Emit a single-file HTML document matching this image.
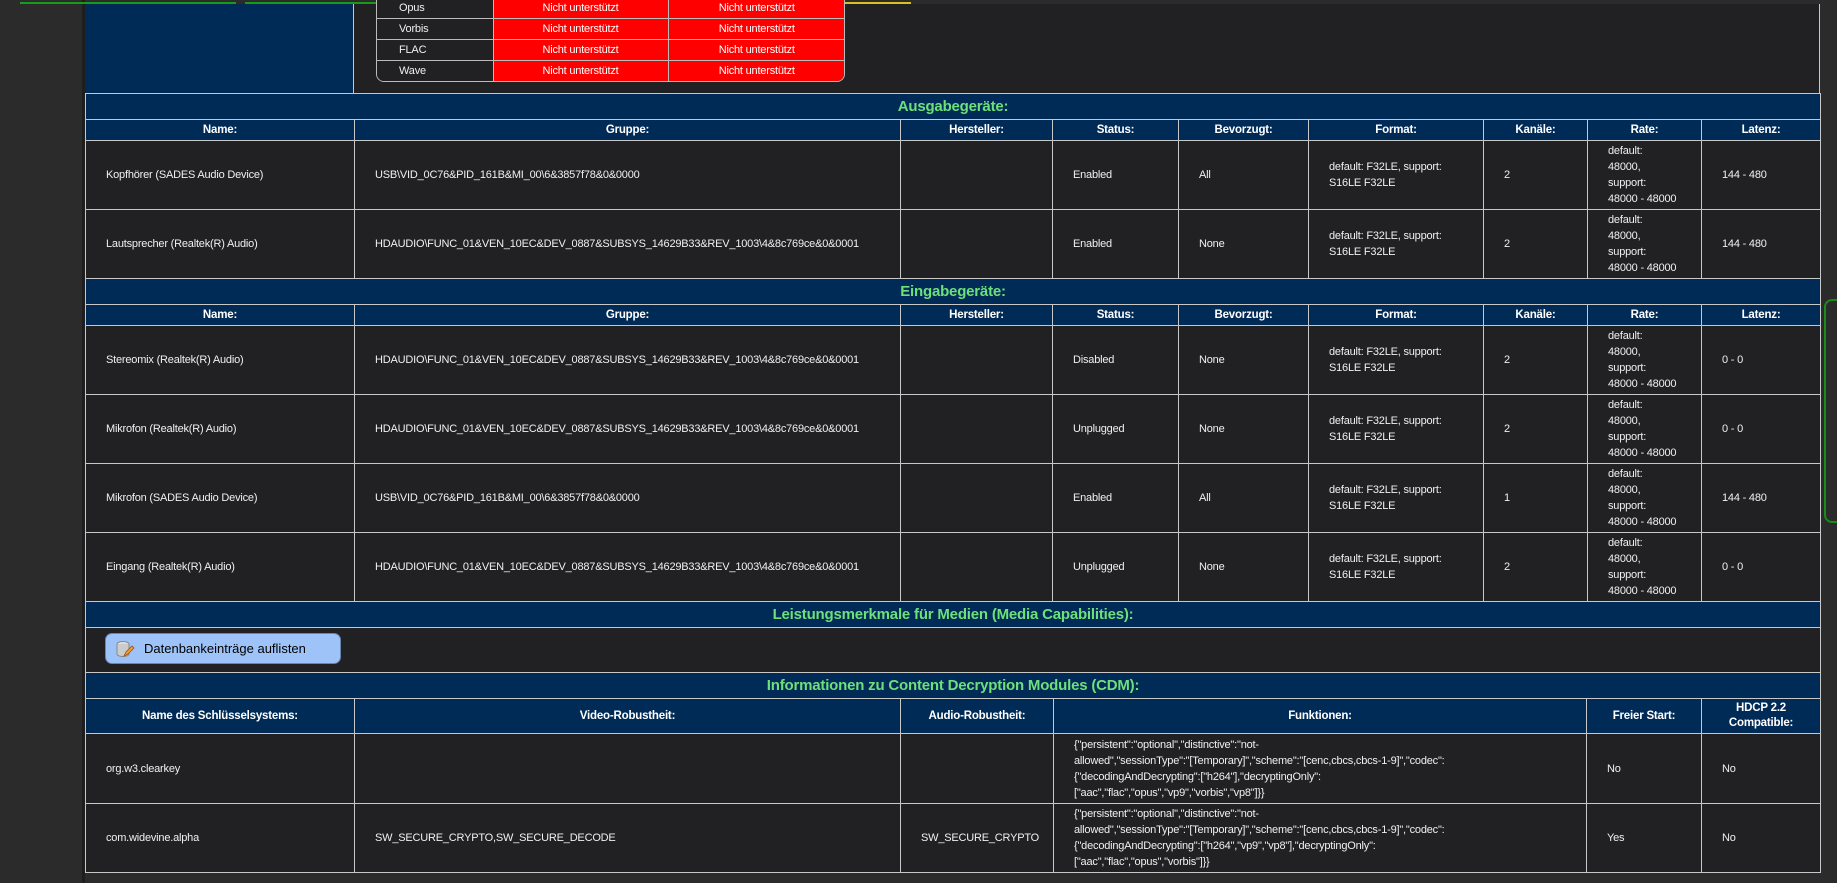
<!DOCTYPE html>
<html><head><meta charset="utf-8"><style>
*{box-sizing:border-box;margin:0;padding:0}
body{width:1837px;height:883px;background:#2b2b2b;position:relative;overflow:hidden;font-family:"Liberation Sans",sans-serif;color:#f0f0f0;font-size:12px}
.abs{position:absolute}
table{position:absolute;border-collapse:collapse;table-layout:fixed;left:85px;width:1735px}
td,th{border:1px solid #c8c8c8;overflow:hidden;white-space:nowrap}
td{background:#212124;padding:0 0 0 20px;line-height:16px;font-size:11px;letter-spacing:-0.2px}
th{background:#002b57;color:#fff;font-size:11.5px;font-weight:bold;text-align:center;letter-spacing:-0.2px}
th.sec{color:#6de07a;font-size:15px;height:26px}
td.w{white-space:normal}
.codec td{background:#212124;height:21px;padding:0;border-color:#bbb}
.codec td.r{background:#f00;color:#fff;text-align:center}
</style></head><body>
<div class="abs" style="left:82px;top:0;width:3px;height:883px;background:#1e1e1e"></div>
<div class="abs" style="left:85px;top:0;width:269px;height:93px;background:#002b57;border-right:1px solid #c8c8c8"></div>
<div class="abs" style="left:354px;top:0;width:1466px;height:93px;background:#212124;border-right:1px solid #c8c8c8"></div>
<div class="abs" style="left:85px;top:0;width:1735px;height:4px;background:#2b2b2b"></div>
<div class="abs" style="left:20px;top:2px;width:216px;height:2px;background:#1a9a1a"></div>
<div class="abs" style="left:245px;top:2px;width:216px;height:2px;background:#1a9a1a"></div>
<div class="abs" style="left:470px;top:2px;width:216px;height:2px;background:#1a9a1a"></div>
<div class="abs" style="left:695px;top:2px;width:216px;height:2px;background:#d8c020"></div>
<div class="abs" style="left:376px;top:-3px;width:469px;height:85px;border:1px solid #bbb;border-top:none;border-radius:0 0 8px 8px;overflow:hidden">
<table class="codec" style="left:0;top:0;width:468px">
<colgroup><col style="width:116px"><col style="width:175px"><col style="width:177px"></colgroup>
<tr><td style="padding-left:22px;border-left:none">Opus</td><td class="r">Nicht unterstützt</td><td class="r" style="border-right:none">Nicht unterstützt</td></tr>
<tr><td style="padding-left:22px;border-left:none">Vorbis</td><td class="r">Nicht unterstützt</td><td class="r" style="border-right:none">Nicht unterstützt</td></tr>
<tr><td style="padding-left:22px;border-left:none">FLAC</td><td class="r">Nicht unterstützt</td><td class="r" style="border-right:none">Nicht unterstützt</td></tr>
<tr><td style="padding-left:22px;border-left:none;border-bottom:none">Wave</td><td class="r" style="border-bottom:none">Nicht unterstützt</td><td class="r" style="border-right:none;border-bottom:none">Nicht unterstützt</td></tr>
</table></div>

<table style="top:93px">
<colgroup><col style="width:269px"><col style="width:546px"><col style="width:152px"><col style="width:126px"><col style="width:130px"><col style="width:175px"><col style="width:104px"><col style="width:114px"><col style="width:119px"></colgroup>
<tr><th class="sec" colspan="9">Ausgabegeräte:</th></tr>
<tr style="height:21px"><th>Name:</th><th>Gruppe:</th><th>Hersteller:</th><th>Status:</th><th>Bevorzugt:</th><th>Format:</th><th>Kanäle:</th><th>Rate:</th><th>Latenz:</th></tr>
<tr style="height:69px"><td>Kopfhörer (SADES Audio Device)</td><td>USB\VID_0C76&amp;PID_161B&amp;MI_00\6&amp;3857f78&amp;0&amp;0000</td><td></td><td>Enabled</td><td>All</td><td>default: F32LE, support:<br>S16LE F32LE</td><td>2</td><td>default:<br>48000,<br>support:<br>48000 - 48000</td><td>144 - 480</td></tr>
<tr style="height:69px"><td>Lautsprecher (Realtek(R) Audio)</td><td>HDAUDIO\FUNC_01&amp;VEN_10EC&amp;DEV_0887&amp;SUBSYS_14629B33&amp;REV_1003\4&amp;8c769ce&amp;0&amp;0001</td><td></td><td>Enabled</td><td>None</td><td>default: F32LE, support:<br>S16LE F32LE</td><td>2</td><td>default:<br>48000,<br>support:<br>48000 - 48000</td><td>144 - 480</td></tr>
<tr><th class="sec" colspan="9">Eingabegeräte:</th></tr>
<tr style="height:21px"><th>Name:</th><th>Gruppe:</th><th>Hersteller:</th><th>Status:</th><th>Bevorzugt:</th><th>Format:</th><th>Kanäle:</th><th>Rate:</th><th>Latenz:</th></tr>
<tr style="height:69px"><td>Stereomix (Realtek(R) Audio)</td><td>HDAUDIO\FUNC_01&amp;VEN_10EC&amp;DEV_0887&amp;SUBSYS_14629B33&amp;REV_1003\4&amp;8c769ce&amp;0&amp;0001</td><td></td><td>Disabled</td><td>None</td><td>default: F32LE, support:<br>S16LE F32LE</td><td>2</td><td>default:<br>48000,<br>support:<br>48000 - 48000</td><td>0 - 0</td></tr>
<tr style="height:69px"><td>Mikrofon (Realtek(R) Audio)</td><td>HDAUDIO\FUNC_01&amp;VEN_10EC&amp;DEV_0887&amp;SUBSYS_14629B33&amp;REV_1003\4&amp;8c769ce&amp;0&amp;0001</td><td></td><td>Unplugged</td><td>None</td><td>default: F32LE, support:<br>S16LE F32LE</td><td>2</td><td>default:<br>48000,<br>support:<br>48000 - 48000</td><td>0 - 0</td></tr>
<tr style="height:69px"><td>Mikrofon (SADES Audio Device)</td><td>USB\VID_0C76&amp;PID_161B&amp;MI_00\6&amp;3857f78&amp;0&amp;0000</td><td></td><td>Enabled</td><td>All</td><td>default: F32LE, support:<br>S16LE F32LE</td><td>1</td><td>default:<br>48000,<br>support:<br>48000 - 48000</td><td>144 - 480</td></tr>
<tr style="height:69px"><td>Eingang (Realtek(R) Audio)</td><td>HDAUDIO\FUNC_01&amp;VEN_10EC&amp;DEV_0887&amp;SUBSYS_14629B33&amp;REV_1003\4&amp;8c769ce&amp;0&amp;0001</td><td></td><td>Unplugged</td><td>None</td><td>default: F32LE, support:<br>S16LE F32LE</td><td>2</td><td>default:<br>48000,<br>support:<br>48000 - 48000</td><td>0 - 0</td></tr>
<tr><th class="sec" colspan="9">Leistungsmerkmale für Medien (Media Capabilities):</th></tr>
<tr style="height:45px"><td colspan="9"></td></tr>
</table>
<div class="abs" style="left:105px;top:633px;width:236px;height:31px;background:#9ec3f8;border:1px solid #6b86ad;border-radius:7px;color:#000;font-size:13px;line-height:29px;padding-left:38px">Datenbankeinträge auflisten</div>
<svg class="abs" style="left:115px;top:639px" width="20" height="20" viewBox="0 0 20 20"><ellipse cx="8" cy="5" rx="6" ry="2.5" fill="#ddd" stroke="#888"/><path d="M2 5v10c0 1.4 2.7 2.5 6 2.5s6-1.1 6-2.5V5" fill="#ccc" stroke="#888"/><path d="M9 17l2-4 6-6 2 2-6 6z" fill="#f0a030" stroke="#a05010" stroke-width=".8"/></svg>

<table style="top:672px">
<colgroup><col style="width:269px"><col style="width:546px"><col style="width:153px"><col style="width:533px"><col style="width:115px"><col style="width:119px"></colgroup>
<tr><th class="sec" colspan="6">Informationen zu Content Decryption Modules (CDM):</th></tr>
<tr style="height:35px"><th>Name des Schlüsselsystems:</th><th>Video-Robustheit:</th><th>Audio-Robustheit:</th><th>Funktionen:</th><th>Freier Start:</th><th style="line-height:15px">HDCP 2.2<br>Compatible:</th></tr>
<tr style="height:70px"><td>org.w3.clearkey</td><td></td><td></td><td class="w">{"persistent":"optional","distinctive":"not-<br>allowed","sessionType":"[Temporary]","scheme":"[cenc,cbcs,cbcs-1-9]","codec":<br>{"decodingAndDecrypting":["h264"],"decryptingOnly":<br>["aac","flac","opus","vp9","vorbis","vp8"]}}</td><td>No</td><td>No</td></tr>
<tr style="height:69px"><td>com.widevine.alpha</td><td>SW_SECURE_CRYPTO,SW_SECURE_DECODE</td><td>SW_SECURE_CRYPTO</td><td class="w">{"persistent":"optional","distinctive":"not-<br>allowed","sessionType":"[Temporary]","scheme":"[cenc,cbcs,cbcs-1-9]","codec":<br>{"decodingAndDecrypting":["h264","vp9","vp8"],"decryptingOnly":<br>["aac","flac","opus","vorbis"]}}</td><td>Yes</td><td>No</td></tr>
</table>
<div class="abs" style="left:1824px;top:299px;width:20px;height:224px;border:2px solid #1a8a1a;border-radius:8px;background:#2b2b2b"></div>
</body></html>
